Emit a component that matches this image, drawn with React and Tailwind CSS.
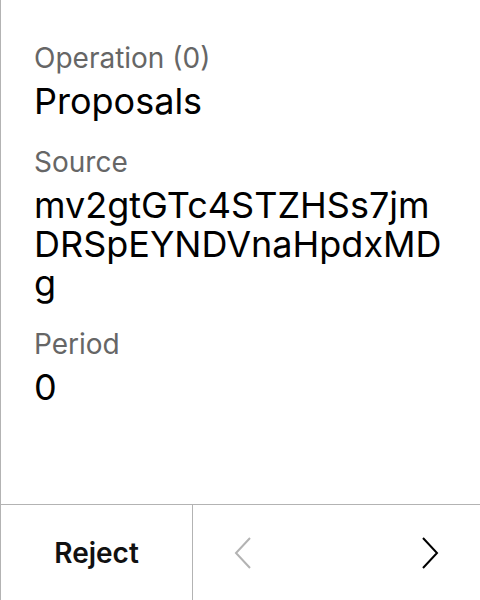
const fields = [
  { label: 'Operation (0)', value: 'Proposals' },
  { label: 'Source', value: 'mv2gtGTc4STZHSs7jmDRSpEYNDVnaHpdxMDg' },
  { label: 'Period', value: '0' },
];

function Chevron({ dir, className }) {
  const points = dir === 'left' ? '16,1 2,16 16,31' : '2,1 16,16 2,31';
  return (
    <svg width="18" height="32" viewBox="0 0 18 32" className={className}>
      <polyline points={points} fill="none" stroke="currentColor" strokeWidth="2" />
    </svg>
  );
}

export default function App() {
  return (
    <div className="flex h-[600px] w-full flex-col border-l border-[#b3b3b3] bg-white font-['Inter','Noto_Sans',sans-serif]">
      {/* Fields */}
      <div className="flex flex-1 flex-col gap-[24px] px-[33px] pt-[41px]">
        {fields.map((f) => (
          <div key={f.label} className="flex flex-col gap-[7px]">
            <p className="text-[28px] leading-[34px] text-[#666666]">{f.label}</p>
            <p className="break-all text-[36px] leading-[39px] text-black">{f.value}</p>
          </div>
        ))}
      </div>

      {/* Footer actions */}
      <div className="flex h-[96px] border-t border-[#b3b3b3]">
        <button className="flex w-[192px] items-center justify-center border-r border-[#b3b3b3] text-[28px] font-semibold text-[#111]">
          Reject
        </button>
        <div className="flex flex-1 items-center justify-between px-[41px]">
          <Chevron dir="left" className="text-[#b3b3b3]" />
          <Chevron dir="right" className="text-black" />
        </div>
      </div>
    </div>
  );
}
